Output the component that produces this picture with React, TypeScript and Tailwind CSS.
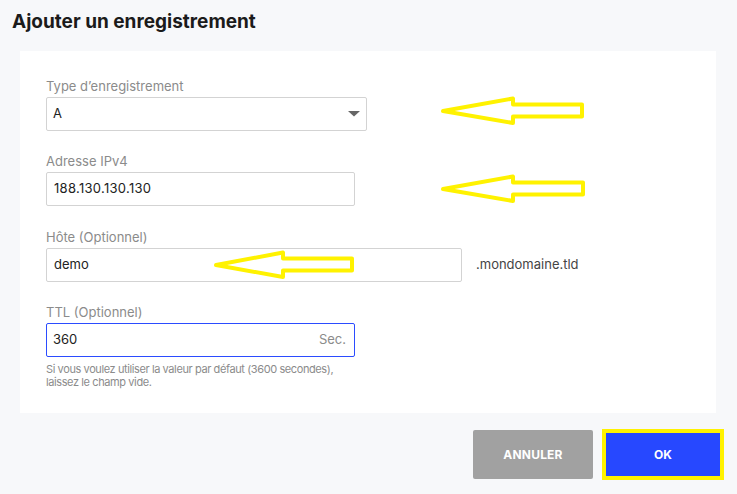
import { ReactNode } from "react";

const FONT = { fontFamily: "Inter, 'Liberation Sans', sans-serif" };

function Field({ label, className, children }: { label: string; className?: string; children: ReactNode }) {
  return (
    <div className={className}>
      <div className="text-[13px] leading-4 text-[#8b8b8b] mb-[3px]">{label}</div>
      {children}
    </div>
  );
}

// Yellow outline arrows pointing left (annotations over the form)
function Arrow({ x1, x2, y, head }: { x1: number; x2: number; y: number; head: number }) {
  const hx = x1 + head;
  const pts = [
    [x1, y],
    [hx, y - 12.5],
    [hx, y - 6.5],
    [x2, y - 6.5],
    [x2, y + 5.5],
    [hx, y + 5.5],
    [hx, y + 12],
  ]
    .map((p) => p.join(","))
    .join(" ");
  return <polygon points={pts} fill="none" stroke="#fff200" strokeWidth={4} strokeLinejoin="round" />;
}

export default function App() {
  return (
    <div className="relative h-[494px] w-[737px] bg-[#f7f8fa] overflow-hidden" style={FONT}>
      <h1 className="pt-[10px] pl-[12px] text-[19px] leading-6 font-bold text-[#1b1b1b]">
        Ajouter un enregistrement
      </h1>

      <div className="ml-[20px] mt-[17px] w-[696px] h-[362px] bg-white pl-[26px] pt-[27px]">
        <Field label="Type d’enregistrement">
          <div className="flex items-center justify-between w-[321px] h-[34px] border border-[#d3d3d3] rounded-[2px] pl-[6px] pr-[6px]">
            <span className="text-[13px] text-[#222]">A</span>
            <svg width="12" height="6" viewBox="0 0 12 6">
              <polygon points="0,0 12,0 6,5.5" fill="#666" />
            </svg>
          </div>
        </Field>

        <Field label="Adresse IPv4" className="mt-[22px]">
          <div className="flex items-center w-[309px] h-[34px] border border-[#d3d3d3] rounded-[2px] px-[7px] text-[13px] text-[#222] tracking-[0.3px]">
            188.130.130.130
          </div>
        </Field>

        <Field label="Hôte (Optionnel)" className="mt-[23px]">
          <div className="flex items-center">
            <div className="flex items-center w-[416px] h-[34px] border border-[#d3d3d3] rounded-[2px] px-[7px] text-[13px] text-[#222]">
              demo
            </div>
            <span className="ml-[14px] text-[13px] text-[#444]">.mondomaine.tld</span>
          </div>
        </Field>

        <Field label="TTL (Optionnel)" className="mt-[22px]">
          <div className="flex items-center justify-between w-[309px] h-[34px] border border-[#2b4cff] rounded-[2px] pl-[6px] pr-[8px] text-[13px]">
            <span className="text-[#222]">360</span>
            <span className="text-[#8b8b8b]">Sec.</span>
          </div>
          <p className="mt-[6px] text-[11px] leading-[13px] tracking-[-0.4px] text-[#8b8b8b]">
            Si vous voulez utiliser la valeur par défaut (3600 secondes),
            <br />
            laissez le champ vide.
          </p>
        </Field>
      </div>

      <div className="flex justify-end items-center gap-[9px] pr-[13px] mt-[16px]">
        <button className="w-[120px] h-[49px] rounded-[2px] bg-[#a1a1a1] text-white text-[12px] font-bold tracking-[0.2px]">
          ANNULER
        </button>
        <button className="w-[122px] h-[51px] border-[4.5px] border-[#fff200] bg-[#2748ff] text-white text-[12px] font-bold">
          OK
        </button>
      </div>

      <svg className="absolute inset-0 pointer-events-none" width="737" height="494">
        <Arrow x1={443} x2={582} y={111} head={70} />
        <Arrow x1={443} x2={583} y={189} head={70} />
        <Arrow x1={216} x2={352} y={265} head={67} />
      </svg>
    </div>
  );
}
